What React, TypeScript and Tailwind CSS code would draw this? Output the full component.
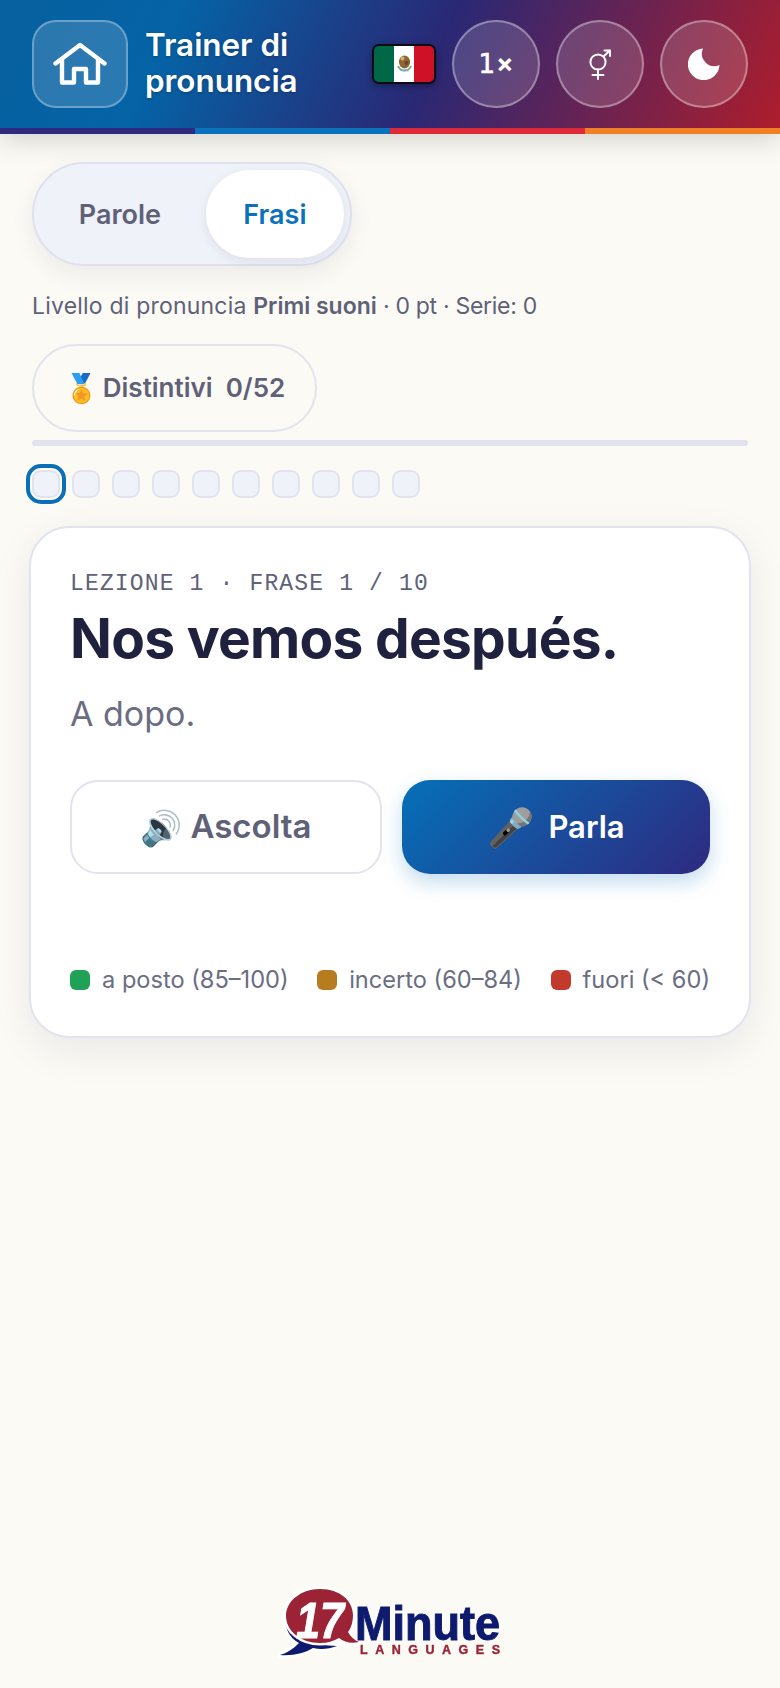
const inter = "font-['Inter','Noto_Sans',sans-serif]";

function HomeIcon() {
  return (
    <svg width="54" height="44" viewBox="0 0 54 44" fill="none" stroke="white" strokeWidth="4.4" strokeLinecap="round" strokeLinejoin="round">
      <path d="M2.5 21.5 L27 3 L51.5 21.5" />
      <path d="M9 18 V40.5 H21 V27 H33 V40.5 H45 V18" />
    </svg>
  );
}

function GenderIcon() {
  return (
    <svg width="22" height="31" viewBox="0 0 22 31" fill="none" stroke="white" strokeWidth="2" strokeLinecap="round" strokeLinejoin="round">
      <circle cx="9" cy="13" r="7.6" />
      <path d="M9 20.6 V30 M3.5 26 H14.5" />
      <path d="M14.5 7.5 L21 1.5 M15.5 1.5 H21 V7" />
    </svg>
  );
}

function MoonIcon() {
  return (
    <svg width="32" height="32" viewBox="0 0 32 32">
      <path fill="white" d="M15 .5 A15.8 15.8 0 1 0 31.5 17 A12.5 12.5 0 0 1 15 .5 Z" />
    </svg>
  );
}

function Flag() {
  return (
    <div className="flex w-[64px] h-[40px] rounded-[7px] border-2 border-[#0b0b14] overflow-hidden shadow-[0_2px_6px_rgba(0,0,0,0.35)]">
      <div className="flex-1 bg-[#006847]" />
      <div className="flex-1 bg-white flex items-center justify-center">
        <svg width="17" height="20" viewBox="0 0 17 20">
          <ellipse cx="8.5" cy="8" rx="5.6" ry="6.4" fill="#8f6536" />
          <circle cx="6.5" cy="4.5" r="2" fill="#d3b06e" />
          <circle cx="10.5" cy="9" r="2" fill="#6b4526" />
          <path d="M2 12 C4.5 18 12.5 18 15 12" fill="none" stroke="#6aa27a" strokeWidth="1.8" />
          <path d="M4.5 16.5 H12.5" stroke="#7fa7c9" strokeWidth="1.4" />
        </svg>
      </div>
      <div className="flex-1 bg-[#ce1126]" />
    </div>
  );
}

function Logo() {
  return (
    <svg width="250" height="72" viewBox="0 0 250 72" className="[filter:drop-shadow(0_0_2px_white)]">
      <path d="M13 20 C7 34 11 50 24 57 C18 63 12 67 5 69 C18 70 30 67 38 62 C46 64 54 63 62 60 C38 60 14 48 13 20 Z" fill="#0e1a6e" stroke="white" strokeWidth="5" paintOrder="stroke" strokeLinejoin="round" />
      <path d="M45 3 C65 3 78 15 78 29 C78 36 76 42 73 46 C75 50 79 54 84 56 C76 58 69 56 64 52 C59 55 52 57 45 57 C26 57 11 45 11 30 C11 15 26 3 45 3 Z" fill="#9b2335" stroke="white" strokeWidth="5" paintOrder="stroke" strokeLinejoin="round" />
      <text x="21" y="52" fontFamily="Liberation Sans" fontStyle="italic" fontWeight="700" fontSize="50" fill="white" stroke="white" strokeWidth="1" textLength="48" lengthAdjust="spacingAndGlyphs">17</text>
      <text x="80" y="54" fontFamily="Liberation Sans" fontWeight="700" fontSize="48" fill="#0e1a6e" stroke="#0e1a6e" strokeWidth="1" textLength="145" lengthAdjust="spacingAndGlyphs">Minute</text>
      <text x="85" y="68" fontFamily="Liberation Sans" fontWeight="700" fontSize="12.5" fill="#9b2335" stroke="#9b2335" strokeWidth="0.4" textLength="140" lengthAdjust="spacing">LANGUAGES</text>
    </svg>
  );
}

function RoundButton({ children }: { children: React.ReactNode }) {
  return (
    <div className="w-[88px] h-[88px] rounded-full border-2 border-white/35 bg-white/15 flex items-center justify-center text-white">
      {children}
    </div>
  );
}

function Legend({ color, label }: { color: string; label: string }) {
  return (
    <div className="flex items-center gap-[12px]">
      <span className={`w-[20px] h-[20px] rounded-[6px] ${color}`} />
      <span>{label}</span>
    </div>
  );
}

export default function App() {
  return (
    <div className={`${inter} min-h-[1688px] bg-[#fbfaf4] flex flex-col`}>
      <div className="shadow-[0_6px_26px_rgba(0,0,0,0.16)]">
        <header className="h-[128px] pl-[32px] pr-[32px] flex items-center bg-[linear-gradient(115deg,#07609f_0%,#0563a6_22%,#2a2875_55%,#ae1d2c_100%)]">
          <div className="w-[96px] h-[88px] rounded-[24px] border-2 border-white/30 bg-white/15 flex items-center justify-center">
            <HomeIcon />
          </div>
          <div className="ml-[17px] mt-[-2px] text-white font-semibold text-[31.4px] leading-[36px] [text-shadow:0_1px_3px_rgba(0,0,0,0.25)]">
            Trainer di
            <br />
            pronuncia
          </div>
          <div className="ml-auto flex items-center gap-[16px]">
            <Flag />
            <RoundButton>
              <span className="flex items-baseline gap-[1px]">
                <span className="font-['DejaVu_Sans',sans-serif] text-[26px] [-webkit-text-stroke:0.6px_white]">1</span>
                <span className="text-[26px] font-bold">×</span>
              </span>
            </RoundButton>
            <RoundButton><GenderIcon /></RoundButton>
            <RoundButton><MoonIcon /></RoundButton>
          </div>
        </header>
        <div className="flex h-[6px]">
          <div className="flex-1 bg-[#2e2a80]" />
          <div className="flex-1 bg-[#0a72bd]" />
          <div className="flex-1 bg-[#df2a3a]" />
          <div className="flex-1 bg-[#ef8024]" />
        </div>
      </div>

      <main className="px-[32px] pt-[28px] flex flex-col flex-1">
        <div className="w-[320px] h-[104px] rounded-full border-2 border-[#dfe1ee] bg-[#f0f2f9] p-[6px] flex items-center shadow-[0_8px_24px_rgba(30,30,80,0.07)]">
          <div className="w-[162px] mr-[6px] pt-[2px] text-center text-[27px] font-semibold text-[#5e6178]">Parole</div>
          <div className="w-[140px] h-[88px] pt-[2px] rounded-full bg-white flex items-center justify-center text-[27px] font-semibold text-[#0a72bd] shadow-[0_4px_12px_rgba(30,30,80,0.08)]">
            Frasi
          </div>
        </div>

        <p className="mt-[24px] text-[23px] leading-[32px] text-[#5e6178] whitespace-nowrap">
          <span className="tracking-[0.2px]">Livello di pronuncia </span>
          <b className="font-semibold">Primi suoni</b>
          <span className="tracking-[-0.3px]"> · 0 pt · Serie: 0</span>
        </p>

        <div className="mt-[22px] w-[285px] h-[88px] rounded-full border-2 border-[#e1e3ef] flex items-center justify-center gap-[4px] text-[26px] font-semibold text-[#5e6178] whitespace-pre">
          <span className="text-[28px]">🏅</span>
          <span className="mt-[-2px]">Distintivi  0/52</span>
        </div>

        <div className="mt-[8px] h-[6px] rounded-full bg-[#e2e2ee]" />

        <div className="mt-[24px] flex gap-[12px]">
          {Array.from({ length: 10 }, (_, i) => (
            <span
              key={i}
              className={
                i === 0
                  ? "w-[28px] h-[28px] rounded-[9px] border-2 border-[#e1e3ef] bg-[#f0f2f9] outline-[4px] outline-[#0a6fb6] outline-offset-[2px]"
                  : "w-[28px] h-[28px] rounded-[9px] border-2 border-[#e1e3ef] bg-[#f0f2f9]"
              }
            />
          ))}
        </div>

        <section className="mt-[28px] mx-[-3px] h-[512px] rounded-[40px] border-2 border-[#e1e3ef] bg-white px-[39px] pt-[42px] shadow-[0_12px_40px_rgba(30,30,80,0.08)]">
          <div className="font-['Liberation_Mono',monospace] text-[23px] leading-[28px] tracking-[1.15px] text-[#5e6178]">LEZIONE 1 · FRASE 1 / 10</div>
          <h1 className="mt-[7px] text-[55px] leading-[66px] font-bold tracking-[-0.7px] text-[#20213f]">Nos vemos después.</h1>
          <p className="mt-[21px] text-[34px] leading-[44px] text-[#6a6d83]">A dopo.</p>
          <div className="mt-[44px] flex gap-[20px]">
            <div className="flex-1 h-[94px] rounded-[28px] border-2 border-[#e1e3ef] bg-white flex items-center justify-center gap-[8px] text-[33px] font-semibold text-[#5e6178]">
              <span className="text-[34px]">🔊</span><span>Ascolta</span>
            </div>
            <div className="flex-1 h-[94px] rounded-[28px] bg-[linear-gradient(135deg,#0570b8,#2e2a80)] flex items-center justify-center gap-[14px] text-[31px] font-semibold text-white shadow-[0_8px_20px_rgba(10,114,189,0.25)]">
              <span className="text-[38px]">🎤</span><span>Parla</span>
            </div>
          </div>
          <div className="mt-[91px] flex justify-between text-[23.6px] leading-[30px] text-[#6a6d83]">
            <Legend color="bg-[#1fa257]" label="a posto (85–100)" />
            <Legend color="bg-[#b77c1f]" label="incerto (60–84)" />
            <Legend color="bg-[#c23a2b]" label="fuori (< 60)" />
          </div>
        </section>

        <div className="mt-auto mb-[30px] ml-[20px] flex justify-center">
          <Logo />
        </div>
      </main>
    </div>
  );
}
